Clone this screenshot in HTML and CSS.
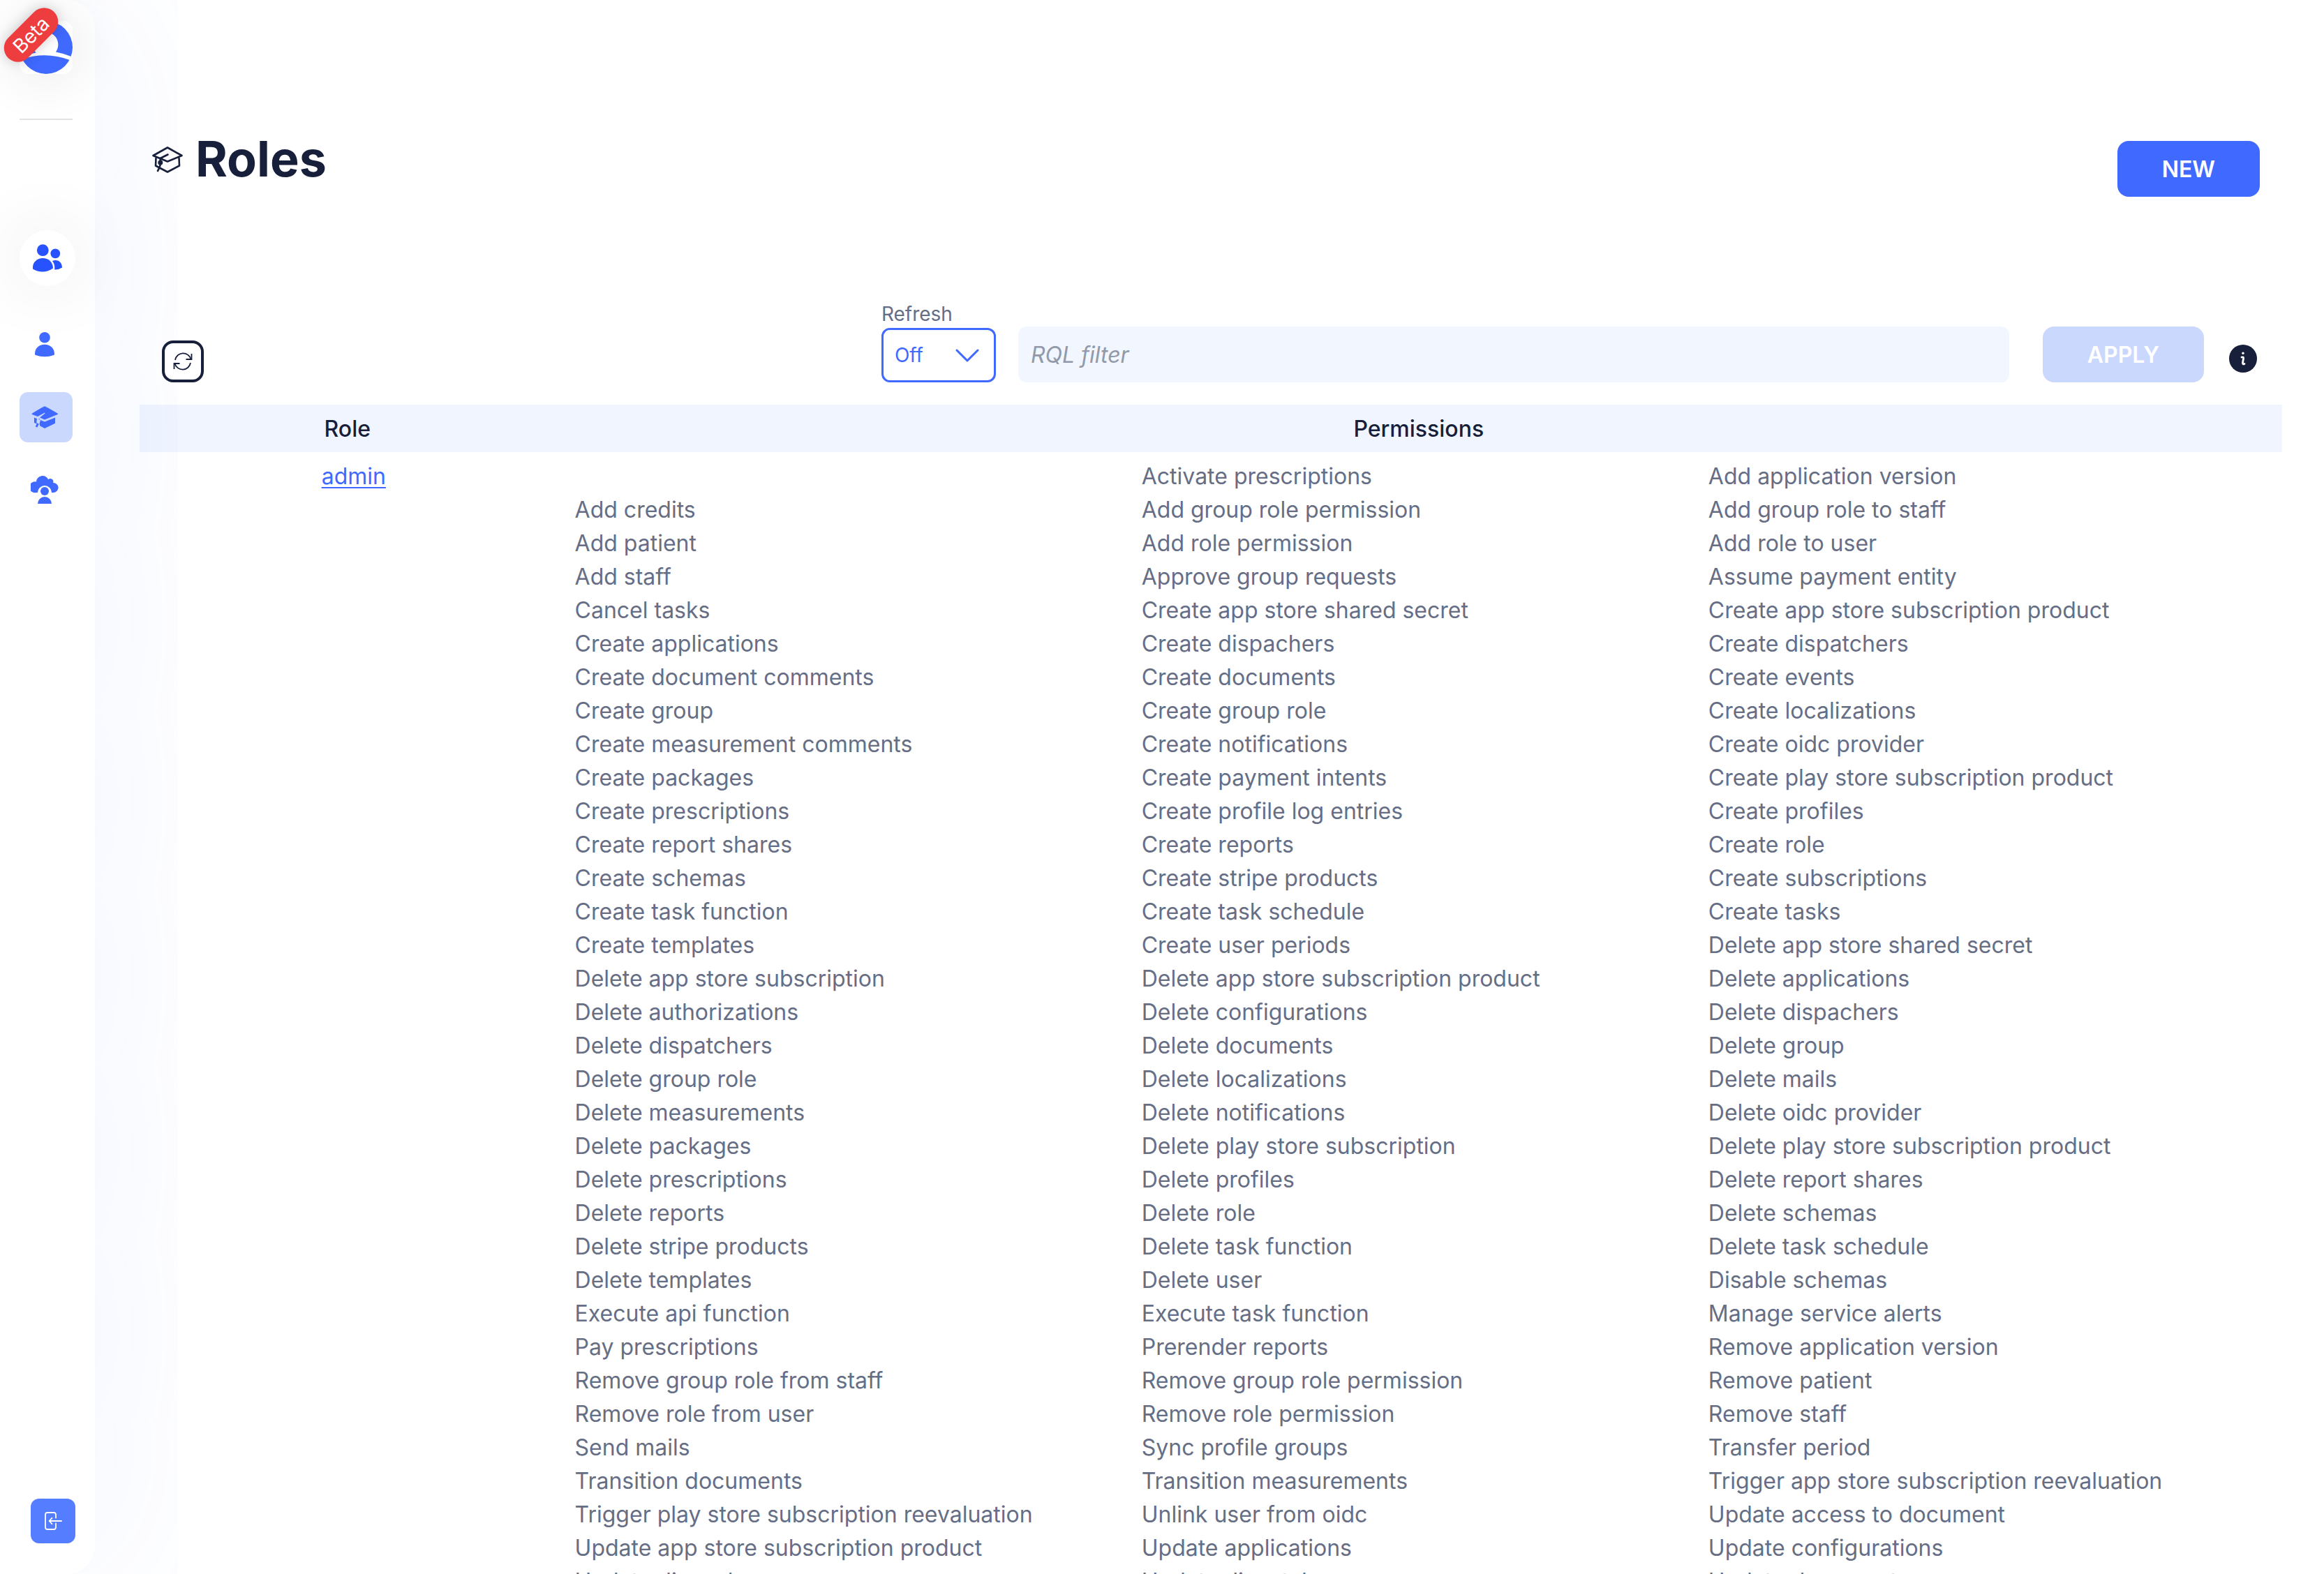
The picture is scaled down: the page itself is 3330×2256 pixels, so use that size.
FILE: index.html
```html
<!DOCTYPE html>
<html lang="en">
<head>
<meta charset="utf-8">
<title>Roles</title>
<link rel="stylesheet" href="styles.css">
</head>
<body>
<div class="app">
  <nav class="sidebar" aria-label="Main">
    <div class="brand">
      <svg class="logo" viewBox="0 0 76 76" aria-hidden="true">
        <rect width="76" height="76" rx="14" fill="#fff"/>
        <circle cx="38" cy="38" r="38" fill="#4069ff"/>
        <path d="M11 48.500Q17 47 23.500 45.500A18 18 0 1 1 52 44.500Q63 46.500 74 51L72 56Q38 43.500 6 54Z" fill="#fff"/>
      </svg>
      <span class="beta">Beta</span>
    </div>
    <hr class="divider">
    <a class="nav-section" href="#users" aria-label="Users">
      <svg width="42" height="40" viewBox="0 0 42 40" aria-hidden="true" fill="#2653ff">
        <circle cx="14.300" cy="8.700" r="8.400"/>
        <circle cx="32.300" cy="13.300" r="6.900"/>
        <path d="M0 33C0 26 6 20 14.300 20S29 26 29 34.500C20 41 9 41 0 35.500Z"/>
        <path d="M28 24C36 21 42 26 42 33.500Q37 36.800 31.200 36.600Q32 29 28 24Z"/>
      </svg>
    </a>
    <ul class="nav-list">
      <li><a class="nav-item" href="#user" aria-label="User">
        <svg width="40" height="40" viewBox="0 0 40 40" aria-hidden="true" fill="#4069ff">
          <circle cx="20" cy="9.700" r="7.800"/>
          <path d="M6 33C6 25 12 19.700 20 19.700S34 25 34 33.500Q34 34.500 33 35Q20 39.500 7 35Q6 34.500 6 33.500Z"/>
        </svg></a></li>
      <li><a class="nav-item nav-item--active" href="#roles" aria-label="Roles" aria-current="page">
        <svg width="40" height="40" viewBox="0 0 40 40" aria-hidden="true">
          <path d="M20 4.300Q21 4.300 38.500 14.500Q39.500 15.300 38.500 16L20 23.500L13 20.500L20.500 14.500L20 13.500L10 19L2 16Q1 15.300 2 14.500Q19 4.300 20 4.300Z" fill="#4069ff"/>
          <path d="M5 20.500L20 26.500L35 20.500V28Q35 28.500 34.500 29L20 36L13.500 32.500Q11.500 29 14 25L12 21.500L10 22.500Q7.500 27 9 29.500L5 28Z" fill="#4069ff"/>
          <path d="M11.300 20.500Q8.500 24 11 29.500" fill="none" stroke="#cad8fe" stroke-width="2.600"/>
          <path d="M10.500 29L8 34" stroke="#4069ff" stroke-width="2.800"/>
        </svg></a></li>
      <li><a class="nav-item" href="#cloud" aria-label="Cloud user">
        <svg width="40" height="40" viewBox="0 0 40 40" aria-hidden="true" fill="#4069ff">
          <path d="M8 24A8 8 0 1 1 8 8.500A9 9 0 0 1 25.200 5.300A4.200 4.200 0 0 1 32 10A7 7 0 1 1 33 24H30A10 10 0 1 0 10 24Z"/>
          <circle cx="20" cy="22" r="6"/>
          <path d="M10 40A10 10 0 0 1 30 40Z"/>
        </svg></a></li>
    </ul>
    <button class="logout" type="button" aria-label="Log out">
      <svg width="28" height="28" viewBox="0 0 28 28" aria-hidden="true" fill="none" stroke="#fff" stroke-width="1.800" stroke-linecap="round" stroke-linejoin="round">
        <path d="M18 9.500V5Q18 2 15 2H6Q3 2 3 5V23Q3 26 6 26H15Q18 26 18 23V17.500"/>
        <path d="M26 14H9M12.500 9.800L8.500 14L12.500 18.200"/>
      </svg>
    </button>
  </nav>

  <main class="main">
    <header class="page-head">
      <h1 class="title">
        <svg width="44" height="40" viewBox="0 0 44 40" aria-hidden="true" fill="none" stroke="#171f3a" stroke-width="2.600" stroke-linejoin="round" stroke-linecap="round">
          <path d="M22 3.500L42.500 15L22 23.500L1.500 15Z"/>
          <path d="M5.500 18.500L5 29.500L22 38.500L39 29.500L38.500 18.500"/>
          <path d="M22.500 13.500L11.500 19Q13.500 28.500 8 37"/>
          <circle cx="11.800" cy="25" r="2.200" fill="#171f3a"/>
        </svg>
        Roles
      </h1>
      <button class="btn btn--new" type="button">NEW</button>
    </header>

    <form class="toolbar">
      <div class="toolbar-left">
        <button class="reload" type="button" aria-label="Reload">
          <svg width="28" height="28" viewBox="0 0 28 28" aria-hidden="true" fill="none" stroke="#171f3a" stroke-width="1.800">
            <path d="M3 12A11.500 11.500 0 0 1 25.500 11"/>
            <path d="M26.500 3V11H18.500"/>
            <path d="M25 16A11.500 11.500 0 0 1 2.500 17"/>
            <path d="M1.500 25V17H9.500"/>
          </svg>
        </button>
      </div>
      <div class="field">
        <label class="field-label" for="refresh">Refresh</label>
        <div class="select-box">
          <select class="select" id="refresh"><option>Off</option><option>10s</option></select>
          <svg class="chevron" viewBox="0 0 34 20" aria-hidden="true" fill="none" stroke="#4069ff" stroke-width="3" stroke-linecap="round" stroke-linejoin="round"><path d="M2 2L17 17L32 2"/></svg>
        </div>
      </div>
      <input class="filter" type="text" placeholder="RQL filter" aria-label="RQL filter">
      <button class="btn btn--apply" type="submit" disabled>APPLY</button>
      <button class="info" type="button" aria-label="Filter help">
        <svg width="40" height="40" viewBox="0 0 40 40" aria-hidden="true">
          <circle cx="20" cy="20" r="20" fill="#171f3a"/>
          <circle cx="20" cy="12.300" r="1.700" fill="#fff"/>
          <path d="M18 18Q20.800 17.300 20.600 19.500L19.500 26Q19.400 28.800 22 27.500" fill="none" stroke="#fff" stroke-width="2.800" stroke-linecap="round"/>
        </svg>
      </button>
    </form>

    <table class="roles">
      <thead>
        <tr><th class="col-role" scope="col">Role</th><th scope="col">Permissions</th></tr>
      </thead>
      <tbody>
        <tr>
          <td class="role-cell"><a class="role-link" href="#admin">admin</a></td>
          <td class="permission-cell">
            <ul class="permissions">
              <li>Activate prescriptions</li><li>Add application version</li>
              <li>Add credits</li><li>Add group role permission</li><li>Add group role to staff</li>
              <li>Add patient</li><li>Add role permission</li><li>Add role to user</li>
              <li>Add staff</li><li>Approve group requests</li><li>Assume payment entity</li>
              <li>Cancel tasks</li><li>Create app store shared secret</li><li>Create app store subscription product</li>
              <li>Create applications</li><li>Create dispachers</li><li>Create dispatchers</li>
              <li>Create document comments</li><li>Create documents</li><li>Create events</li>
              <li>Create group</li><li>Create group role</li><li>Create localizations</li>
              <li>Create measurement comments</li><li>Create notifications</li><li>Create oidc provider</li>
              <li>Create packages</li><li>Create payment intents</li><li>Create play store subscription product</li>
              <li>Create prescriptions</li><li>Create profile log entries</li><li>Create profiles</li>
              <li>Create report shares</li><li>Create reports</li><li>Create role</li>
              <li>Create schemas</li><li>Create stripe products</li><li>Create subscriptions</li>
              <li>Create task function</li><li>Create task schedule</li><li>Create tasks</li>
              <li>Create templates</li><li>Create user periods</li><li>Delete app store shared secret</li>
              <li>Delete app store subscription</li><li>Delete app store subscription product</li><li>Delete applications</li>
              <li>Delete authorizations</li><li>Delete configurations</li><li>Delete dispachers</li>
              <li>Delete dispatchers</li><li>Delete documents</li><li>Delete group</li>
              <li>Delete group role</li><li>Delete localizations</li><li>Delete mails</li>
              <li>Delete measurements</li><li>Delete notifications</li><li>Delete oidc provider</li>
              <li>Delete packages</li><li>Delete play store subscription</li><li>Delete play store subscription product</li>
              <li>Delete prescriptions</li><li>Delete profiles</li><li>Delete report shares</li>
              <li>Delete reports</li><li>Delete role</li><li>Delete schemas</li>
              <li>Delete stripe products</li><li>Delete task function</li><li>Delete task schedule</li>
              <li>Delete templates</li><li>Delete user</li><li>Disable schemas</li>
              <li>Execute api function</li><li>Execute task function</li><li>Manage service alerts</li>
              <li>Pay prescriptions</li><li>Prerender reports</li><li>Remove application version</li>
              <li>Remove group role from staff</li><li>Remove group role permission</li><li>Remove patient</li>
              <li>Remove role from user</li><li>Remove role permission</li><li>Remove staff</li>
              <li>Send mails</li><li>Sync profile groups</li><li>Transfer period</li>
              <li>Transition documents</li><li>Transition measurements</li><li>Trigger app store subscription reevaluation</li>
              <li>Trigger play store subscription reevaluation</li><li>Unlink user from oidc</li><li>Update access to document</li>
              <li>Update app store subscription product</li><li>Update applications</li><li>Update configurations</li>
              <li>Update dispachers</li><li>Update dispatchers</li><li>Update documents</li>
            </ul>
          </td>
        </tr>
      </tbody>
    </table>
  </main>
</div>
</body>
</html>
```
FILE: styles.css
```css
* { box-sizing: border-box; }

body {
  margin: 0;
  background: #fff;
  color: #666e85;
  font-family: Inter, "Liberation Sans", sans-serif;
  font-size: 32px;
  line-height: 48px;
}

button, input, select { font: inherit; margin: 0; }
button { cursor: pointer; border: 0; padding: 0; }
ul { list-style: none; margin: 0; padding: 0; }
svg { display: block; }

.app { display: flex; height: 100vh; overflow: hidden; }

/* Sidebar */
.sidebar {
  display: flex;
  flex-direction: column;
  align-items: flex-start;
  width: 136px;
  flex: none;
  padding: 30px 28px 44px;
  background: #fff;
  border-radius: 0 40px 40px 0;
  box-shadow: 0 0 280px rgba(64, 105, 255, 0.1);
}

.brand {
  position: relative;
  width: 76px;
  height: 76px;
  border-radius: 14px;
  box-shadow: 0 0 80px rgba(0, 0, 0, 0.12);
}

.logo { width: 76px; height: 76px; }

.beta {
  position: absolute;
  left: -30px;
  top: 0;
  width: 93px;
  height: 40px;
  border-radius: 20px;
  background: #ee3d3e;
  box-shadow: 0 0 20px rgba(0, 0, 0, 0.2);
  color: #fff;
  font-size: 28px;
  line-height: 40px;
  text-align: center;
  transform: rotate(-45deg);
}

.divider { width: 76px; height: 2px; margin: 64px 0 158px; border: 0; background: #e3e3e3; }

.nav-section {
  display: grid;
  place-items: center;
  width: 80px;
  height: 80px;
  flex: none;
  border-radius: 50%;
  background: #fff;
  box-shadow: 0 0 100px rgba(0, 0, 0, 0.1);
}

.nav-list { display: grid; gap: 32px; margin-top: 48px; }

.nav-item {
  display: grid;
  place-items: center;
  width: 76px;
  height: 72px;
  padding-right: 4px;
  border-radius: 12px;
}

.nav-item--active { background: #cad8fe; }

.logout {
  display: grid;
  place-items: center;
  width: 64px;
  height: 64px;
  margin-top: auto;
  margin-left: 16px;
  border-radius: 12px;
  background: #547dff;
}

/* Page */
.main { flex: 1; min-width: 0; padding: 188px 60px 60px 64px; overflow-y: auto; scrollbar-width: none; }

.page-head {
  display: flex;
  justify-content: space-between;
  align-items: flex-start;
  padding: 0 32px 0 18px;
}

.title {
  display: flex;
  align-items: center;
  gap: 18px;
  margin: 0;
  color: #171f3a;
  font-size: 70px;
  font-weight: 700;
  line-height: 80px;
}

.btn { height: 80px; padding: 2px 64px 0; border-radius: 16px; color: #fff; font-weight: 600; }
.btn--new { margin-top: 14px; background: #4069ff; }
.btn--apply { margin-left: 48px; background: #cad8fe; }

.toolbar { display: flex; align-items: flex-end; margin-top: 148px; padding: 0 36px 0 32px; }
.toolbar-left { flex: 1031 1 0; }

.reload {
  display: grid;
  place-items: center;
  width: 60px;
  height: 60px;
  border: 4px solid #171f3a;
  border-radius: 16px;
  background: #fff;
}

.field { width: 164px; }
.field-label { display: block; font-size: 28px; line-height: 40px; }
.select-box { position: relative; }

.select {
  display: block;
  width: 100%;
  height: 78px;
  padding: 0 16px;
  appearance: none;
  border: 3px solid #4069ff;
  border-radius: 12px;
  background: #fff;
  color: #4069ff;
  font-size: 28px;
}

.chevron { position: absolute; right: 24px; top: 30px; width: 34px; height: 20px; pointer-events: none; }

.filter {
  flex: 1384 1 0;
  min-width: 0;
  height: 80px;
  margin-left: 32px;
  padding: 0 18px;
  border: 0;
  border-radius: 12px;
  background: #f1f6ff;
  color: #171f3a;
}

.filter::placeholder { color: #9299a8; font-style: italic; opacity: 1; }
.info { margin: 0 0 14px 36px; background: none; }

/* Roles table */
.roles { width: 100%; margin-top: 32px; border-collapse: collapse; table-layout: fixed; }
.roles th { height: 68px; padding: 2px 0 0; background: rgba(64, 126, 255, 0.073); color: #171f3a; font-weight: 500; }
.roles .col-role { width: 19.4%; }
.roles td { vertical-align: top; }
.roles .role-cell { padding: 11px 0 0 18px; text-align: center; }
.role-link { color: #4069ff; text-underline-offset: 4px; text-decoration-thickness: 2px; }
.roles .permission-cell { padding: 11px 10px 0 28px; }
.permissions { display: grid; grid-template-columns: repeat(3, 1fr); }
.permissions li:first-child { grid-column-start: 2; }
```
